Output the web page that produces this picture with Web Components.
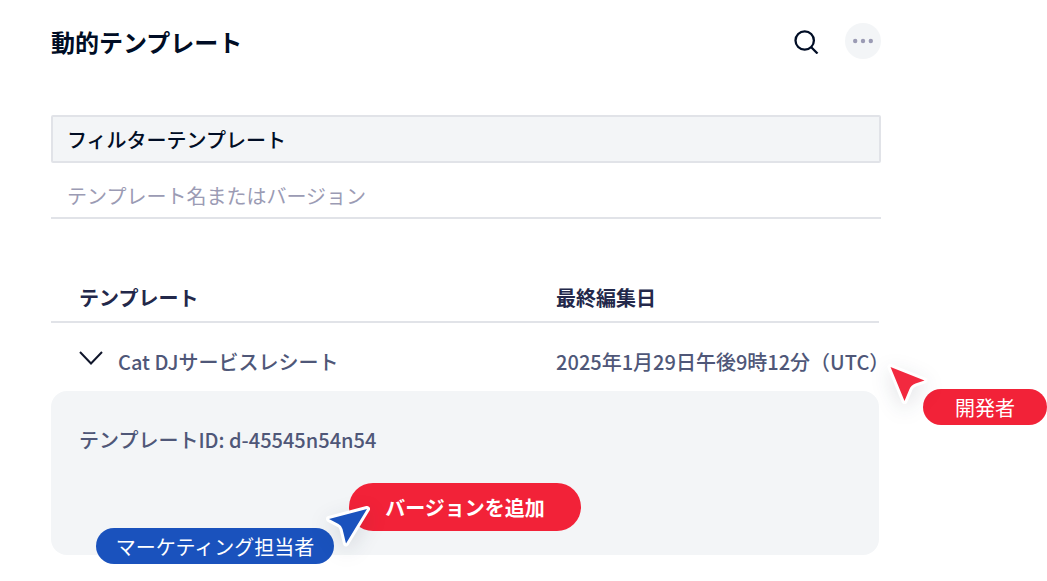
<!DOCTYPE html>
<html lang="ja">
<head>
<meta charset="utf-8">
<meta name="viewport" content="width=device-width, initial-scale=1">
<title>動的テンプレート</title>
<style>
  body {
    margin: 0;
    background: #fff;
    color: #000d25;
    font: 500 20px/28px "Noto Sans CJK JP", sans-serif;
  }
</style>
</head>
<body>
<template-page></template-page>

<template id="template-page">
  <style>
    :host { display: block; padding: 23px 166px 16px 51px; }
    header { display: flex; align-items: center; gap: 26px; height: 36px; margin-bottom: 56px; }
    h1 { flex: 1; margin: 0; padding-top: 2px; font-size: 24px; line-height: 36px; font-weight: 600; }
    template-table { margin: 54px 2px 0 0; }
  </style>
  <header>
    <h1>動的テンプレート</h1>
    <icon-button label="検索">
      <svg width="26" height="26" viewBox="0 0 26 26" fill="none" stroke="#000d25" stroke-width="2.3"><circle cx="11.7" cy="12.5" r="9.2"/><path d="M18 19l6.500 6.500"/></svg>
    </icon-button>
    <icon-button label="その他" filled>
      <svg width="20" height="6" viewBox="0 0 20 6" fill="#9b9bb4"><circle cx="2.2" cy="3" r="2.2"/><circle cx="10" cy="3" r="2.2"/><circle cx="17.8" cy="3" r="2.2"/></svg>
    </icon-button>
  </header>
  <filter-field label="フィルターテンプレート" placeholder="テンプレート名またはバージョン"></filter-field>
  <template-table></template-table>
</template>

<template id="icon-button">
  <style>
    :host { display: block; }
    button { display: grid; place-items: center; min-width: 26px; height: 36px; padding: 0; border: 0; background: none; cursor: pointer; }
    :host([filled]) button { width: 36px; border-radius: 50%; background: #f3f5f7; }
  </style>
  <button type="button"><slot></slot></button>
</template>

<template id="filter-field">
  <style>
    :host { display: block; }
    label { display: block; padding: 9px 14px 7px; border: 2px solid #e1e3e8; border-radius: 2px; background: #f3f5f7; }
    input { display: block; box-sizing: border-box; width: 100%; height: 56px; padding: 12px 16px 2px; border: 0; border-bottom: 2px solid #e1e3e8; border-radius: 0; outline: 0; background: none; color: inherit; font: inherit; font-weight: 400; }
    input::placeholder { color: #9b9bb4; opacity: 1; }
  </style>
  <label for="query"></label>
  <input id="query" type="text">
</template>

<template id="template-table">
  <style>
    :host { display: block; position: relative; color: #4f5778; font-weight: 500; }
    table { width: 100%; border-collapse: separate; border-spacing: 0; table-layout: fixed; }
    th, td { box-sizing: border-box; padding: 0; text-align: left; white-space: nowrap; }
    th { height: 50px; padding-top: 2px; border-bottom: 2px solid #e1e3e8; color: #23284a; font-weight: 600; }
    th:first-child { width: 61%; padding-left: 28px; }
    .row td { height: 68px; padding-top: 10px; }
    .row td:first-child { padding-left: 28px; }
    .name { display: flex; align-items: center; gap: 15px; }
    .toggle { display: block; padding: 0; border: 0; background: none; cursor: pointer; }
    .toggle svg { display: block; margin-bottom: 8px; }
    .detail td { padding: 35px 28px 24px; border-radius: 16px; background: #f3f5f7; }
    p { margin: 0 0 29px; }
    .action { position: relative; width: 232px; margin: 0 auto; }
    .dev { position: absolute; top: 92px; left: 100%; padding-left: 8px; }
    .marketing { position: absolute; top: 20px; right: 211px; }
  </style>
  <table>
    <thead><tr><th scope="col">テンプレート</th><th scope="col">最終編集日</th></tr></thead>
    <tbody>
      <tr class="row">
        <td><div class="name">
          <button class="toggle" type="button" aria-label="詳細" aria-expanded="true"><svg width="24" height="14" viewBox="0 0 24 14" fill="none" stroke="#10162b" stroke-width="2"><path d="M1 1l11 11.500L23 1"/></svg></button>
          <span>Cat DJサービスレシート</span>
        </div></td>
        <td>2025年1月29日午後9時12分（UTC）</td>
      </tr>
      <tr class="detail"><td colspan="2">
        <p>テンプレートID: d-45545n54n54</p>
        <div class="action">
          <pill-button>バージョンを追加</pill-button>
          <cursor-tag class="marketing" tone="blue">マーケティング担当者</cursor-tag>
        </div>
      </td></tr>
    </tbody>
  </table>
  <cursor-tag class="dev" tone="red">開発者</cursor-tag>
</template>

<template id="pill-button">
  <style>
    :host { display: block; }
    button { display: block; width: 100%; height: 48px; padding: 2px 0 0; border: 0; border-radius: 24px; background: #f22238; color: #fff; font: inherit; font-weight: 600; cursor: pointer; }
  </style>
  <button type="button"><slot></slot></button>
</template>

<template id="cursor-tag">
  <style>
    :host { display: flex; color: #fff; white-space: nowrap; pointer-events: none; font-weight: 400; }
    .label { box-sizing: border-box; height: 36px; padding-top: 1px; border-radius: 18px; line-height: 36px; text-align: center; }
    svg { display: block; flex: none; overflow: visible; filter: drop-shadow(0 6px 10px rgb(20 30 60 / .12)); }
    path { stroke: #fff; stroke-width: 6; stroke-linejoin: round; paint-order: stroke; }
    :host([tone="red"]) .label { width: 124px; margin: 24px 0 0 -4px; background: #f22238; }
    :host([tone="red"]) path { fill: #f2293f; }
    :host([tone="red"]) .blue, :host([tone="blue"]) .red { display: none; }
    :host([tone="blue"]) { flex-direction: row-reverse; }
    :host([tone="blue"]) .label { width: 238px; margin: 25px -4px 0 0; background: #1a52bd; }
    :host([tone="blue"]) path { fill: #1a52bd; }
  </style>
  <svg class="red" width="40" height="42" viewBox="0 0 40 42"><path d="M3.500 2L37.500 15.500L28.500 18.500Q24 20 22.500 24L17.500 36Z"/></svg>
  <svg class="blue" width="40" height="42" viewBox="0 0 40 42"><path d="M37 6L-1 16L8.500 21Q12 23 12.500 26L16 40.500Z"/></svg>
  <span class="label"><slot></slot></span>
</template>

<script>
  class TemplateElement extends HTMLElement {
    constructor() {
      super();
      const source = document.getElementById(this.localName);
      this.attachShadow({ mode: "open" }).append(source.content.cloneNode(true));
    }
  }
  class IconButton extends TemplateElement {
    connectedCallback() {
      this.shadowRoot.querySelector("button").setAttribute("aria-label", this.getAttribute("label"));
    }
  }
  class FilterField extends TemplateElement {
    connectedCallback() {
      this.shadowRoot.querySelector("label").textContent = this.getAttribute("label");
      this.shadowRoot.querySelector("input").placeholder = this.getAttribute("placeholder");
    }
  }
  class TemplateTable extends TemplateElement {
    connectedCallback() {
      const toggle = this.shadowRoot.querySelector(".toggle");
      const detail = this.shadowRoot.querySelector(".detail");
      toggle.onclick = () => {
        detail.hidden = !detail.hidden;
        toggle.setAttribute("aria-expanded", String(!detail.hidden));
      };
    }
  }
  customElements.define("icon-button", IconButton);
  customElements.define("filter-field", FilterField);
  customElements.define("pill-button", class extends TemplateElement {});
  customElements.define("cursor-tag", class extends TemplateElement {});
  customElements.define("template-table", TemplateTable);
  customElements.define("template-page", class extends TemplateElement {});
</script>
</body>
</html>
